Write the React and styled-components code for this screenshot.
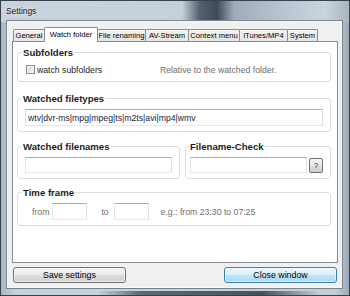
import React from 'react'
import styled, { createGlobalStyle } from 'styled-components'

const GlobalStyle = createGlobalStyle`
    html, body {
        margin: 0;
        padding: 0;
        width: 350px;
        height: 296px;
        overflow: hidden;
        background: #c6d1dc;
    }

    * {
        box-sizing: border-box;
    }
`

const tabs = [
    { label: 'General', w: 32 },
    { label: 'Watch folder', w: 54, active: true },
    { label: 'File renaming', w: 49 },
    { label: 'AV-Stream', w: 44 },
    { label: 'Context menu', w: 52 },
    { label: 'iTunes/MP4', w: 49 },
    { label: 'System', w: 31 },
]

function App() {
    return (
        <>
            <GlobalStyle />
            <Window>
                <TitleBar>Settings</TitleBar>
                <Client>
                    <TabStrip>
                        {tabs.map((t) => (
                            <Tab key={t.label} $w={t.w} $active={t.active}>
                                {t.label}
                            </Tab>
                        ))}
                    </TabStrip>
                    <Panel>
                        <Group>
                            <Legend>Subfolders</Legend>
                            <CheckRow>
                                <CheckLabel>
                                    <CheckBox />
                                    watch subfolders
                                </CheckLabel>
                                <Hint>Relative to the watched folder.</Hint>
                            </CheckRow>
                        </Group>

                        <Group $mt={11}>
                            <Legend>Watched filetypes</Legend>
                            <Field defaultValue="wtv|dvr-ms|mpg|mpeg|ts|m2ts|avi|mp4|wmv" />
                        </Group>

                        <GroupRow>
                            <Group $w={163}>
                                <Legend>Watched filenames</Legend>
                                <Field $h={16} />
                            </Group>
                            <Group $grow $pl={4}>
                                <Legend $ml={-1}>Filename-Check</Legend>
                                <FieldRow>
                                    <Field $h={16} />
                                    <HelpButton>?</HelpButton>
                                </FieldRow>
                            </Group>
                        </GroupRow>

                        <Group $mt={8}>
                            <Legend>Time frame</Legend>
                            <TimeRow>
                                <Hint>from</Hint>
                                <Field $w={35} $ml={3} />
                                <Hint $ml={14}>to</Hint>
                                <Field $w={35} $ml={5} />
                                <Hint $ml={12}>e.g.: from 23:30 to 07:25</Hint>
                            </TimeRow>
                        </Group>
                    </Panel>
                    <ButtonBar>
                        <Button>Save settings</Button>
                        <Button $primary>Close window</Button>
                    </ButtonBar>
                </Client>
            </Window>
        </>
    )
}

export default App

const Window = styled.div`
    width: 350px;
    height: 296px;
    border: 1px solid #38424d;
    padding: 0 7px 7px 6px;
    display: flex;
    flex-direction: column;
    background:
        linear-gradient(to right, #c9d3dd 0%, #c6d0db 52%, #55616e 57%, #3e4a57 62%, #9eabb8 67%, #b7c3cf 80%, #c9d4df 93%, #a9b5c1 100%) top / 100% 21px no-repeat,
        linear-gradient(to right, transparent 28%, #5d6977 40%, #46525f 75%, transparent 92%) bottom / 100% 4px no-repeat,
        linear-gradient(to right, #aab6c3, #c8d2dd 4%, #c3ceda 96%, #9eaab7);
`

const TitleBar = styled.div`
    height: 20px;
    display: flex;
    align-items: center;
    margin-left: -1px;
    font: 8.4px 'Liberation Sans', Arial, sans-serif;
    color: #1a1a1a;
    text-shadow: 0 0 4px rgba(255, 255, 255, 0.9);
`

const Client = styled.div`
    flex: 1;
    background: #f0f0f0;
    border: 1px solid #f6f8fa;
    box-shadow: 0 0 0 1px #76838f;
    padding: 5px 3px 4px 4px;
    display: flex;
    flex-direction: column;
    font-family: 'Liberation Sans', Arial, sans-serif;
`

const TabStrip = styled.div`
    height: 15px;
    margin-bottom: -1px;
    padding-left: 1px;
    display: flex;
    align-items: flex-start;
`

const Tab = styled.div`
    width: ${(props) => props.$w}px;
    margin-right: -1px;
    border: 1px solid #898c95;
    border-bottom: none;
    border-radius: 2px 2px 0 0;
    display: flex;
    justify-content: center;
    align-items: center;
    font-size: 7.6px;
    color: #000;
    white-space: nowrap;
    position: relative;
    height: ${(props) => (props.$active ? 15 : 12)}px;
    margin-top: ${(props) => (props.$active ? 0 : 2)}px;
    padding-bottom: ${(props) => (props.$active ? 2 : 0)}px;
    background: ${(props) => (props.$active ? '#fff' : 'linear-gradient(#f5f5f5, #e4e4e4)')};
    z-index: ${(props) => (props.$active ? 2 : 1)};
`

const Panel = styled.div`
    flex: 1;
    border: 1px solid #898c95;
    background: #fff;
    padding: 5px 6px 0 4px;
    display: flex;
    flex-direction: column;
`

const Group = styled.fieldset`
    margin: ${(props) => props.$mt || 0}px 0 0;
    padding: 5px 7px 5px ${(props) => props.$pl ?? 7}px;
    border: 1px solid #d5dfe5;
    border-radius: 3px;
    min-width: 0;
    ${(props) => (props.$w ? `width: ${props.$w}px; flex: none;` : '')}
    ${(props) => (props.$grow ? 'flex: 1;' : '')}
`

const Legend = styled.legend`
    padding: 0 1px;
    margin-left: ${(props) => props.$ml ?? -3}px;
    font: bold 9.6px/11px 'Liberation Sans', Arial, sans-serif;
    color: #1e1e1e;
`

const GroupRow = styled.div`
    display: flex;
    gap: 5px;
    margin-top: 9px;
`

const CheckRow = styled.div`
    height: 13px;
    display: grid;
    grid-template-columns: 135px 1fr;
    align-items: center;
    font-size: 8.7px;
`

const CheckLabel = styled.label`
    display: flex;
    align-items: center;
    gap: 2px;
    color: #1e1e1e;
`

const CheckBox = styled.span`
    width: 9px;
    height: 9px;
    margin-left: 1px;
    border: 1px solid #8e8f8f;
    background: linear-gradient(135deg, #d6d6d6, #f6f6f6);
    box-shadow: inset 0 0 0 1px #f4f4f4;
`

const Hint = styled.span`
    margin-left: ${(props) => props.$ml || 0}px;
    font-size: 8.7px;
    color: #6f6f6f;
    white-space: nowrap;
`

const Field = styled.input`
    display: block;
    width: ${(props) => (props.$w ? `${props.$w}px` : '100%')};
    height: ${(props) => props.$h || 17}px;
    min-width: 0;
    flex: ${(props) => (props.$w ? 'none' : 1)};
    margin: 0 0 0 ${(props) => props.$ml || 0}px;
    padding: 0 2px;
    border: 1px solid;
    border-color: #abadb3 #dbdfe6 #e3e9ef #e2e3ea;
    background: #fff;
    font: 8.7px 'Liberation Sans', Arial, sans-serif;
    color: #1c1c3a;
    outline: none;
`

const FieldRow = styled.div`
    display: flex;
    align-items: center;
    gap: 2px;
`

const HelpButton = styled.button`
    width: 14px;
    height: 15px;
    flex: none;
    padding: 0;
    border: 1px solid #707070;
    border-radius: 2px;
    background: linear-gradient(#f2f2f2, #ebebeb 50%, #dddddd 50%, #cfcfcf);
    font: 8px 'Liberation Sans', Arial, sans-serif;
    color: #222;
`

const TimeRow = styled.div`
    display: flex;
    align-items: center;
    padding-left: 7px;
`

const ButtonBar = styled.div`
    display: flex;
    justify-content: space-between;
    margin-top: 4px;
    padding: 0 1px;
`

const Button = styled.button`
    width: 113px;
    height: 16px;
    padding: 0;
    border: 1px solid ${(props) => (props.$primary ? '#3c7fb1' : '#707070')};
    border-radius: 3px;
    background: ${(props) =>
        props.$primary
            ? 'linear-gradient(#eaf6fd, #d9f0fc 50%, #bee6fd 50%, #a7d9f5)'
            : 'linear-gradient(#f2f2f2, #ebebeb 50%, #dddddd 50%, #cfcfcf)'};
    box-shadow: inset 0 0 0 1px rgba(255, 255, 255, 0.6);
    font: 8.8px 'Liberation Sans', Arial, sans-serif;
    color: #000;
`
